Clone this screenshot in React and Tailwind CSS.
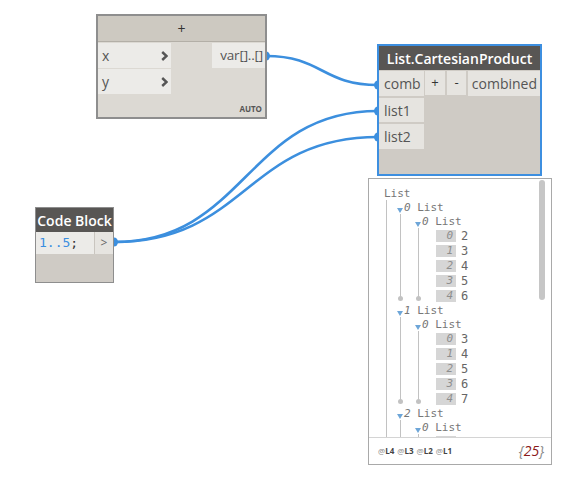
import React from "react";

const Chevron = () => (
  <svg width="7" height="10" viewBox="0 0 7 10" className="block">
    <polyline points="1.2,1 5.5,5 1.2,9" fill="none" stroke="#555" strokeWidth="2.4" />
  </svg>
);

const Tri = () => (
  <span className="inline-block w-0 h-0 border-l-[3.5px] border-r-[3.5px] border-t-[5px] border-l-transparent border-r-transparent border-t-[#6ea6d8] mb-[1px]" />
);

const Line = ({ dot = true }) => (
  <>
    <span className={`absolute left-[3px] top-0 w-px bg-[#c2c2c2] ${dot ? "bottom-[4px]" : "bottom-0"}`} />
    {dot && <span className="absolute left-[1px] bottom-[2px] w-[5px] h-[5px] rounded-full bg-[#c2c2c2]" />}
  </>
);

const Header = ({ i }) => (
  <div className="h-[14px] flex items-end leading-[13px]">
    <Tri />
    <span className="italic ml-[1px]">{i}</span>
    <span className="ml-[6.6px]">List</span>
  </div>
);

const L1Group = ({ i, values }) => (
  <div>
    <Header i={i} />
    <div className="relative pl-[18px]">
      <Line />
      <Header i={0} />
      <div className="relative pl-[21px]">
        <Line />
        {values.map((v, j) => (
          <div key={j} className="h-[15px] flex items-center">
            <span className="w-[20px] h-[12px] bg-[#d6d6d6] text-right pr-[3px] italic text-[#8e8e8e] leading-[12px]">{j}</span>
            <span className="ml-[5px] text-[12px] text-[#666]">{v}</span>
          </div>
        ))}
      </div>
    </div>
  </div>
);

export default function App() {
  const groups = [
    [2, 3, 4, 5, 6],
    [3, 4, 5, 6, 7],
    [4, 5, 6, 7, 8],
  ];
  return (
    <div className="relative w-[576px] h-[478px] bg-white overflow-hidden font-['Open_Sans',sans-serif]">
      {/* wires */}
      <svg className="absolute inset-0 pointer-events-none" width="576" height="478">
        <g fill="none" stroke="#3c8fde" strokeWidth="2.6">
          <path d="M 266 56 C 322 56, 322 85, 378 85" />
          <path d="M 114 242 C 246 242, 246 111, 378 111" />
          <path d="M 114 242 C 246 242, 246 137, 378 137" />
        </g>
        <g fill="#3c8fde">
          <ellipse cx="266" cy="56" rx="4" ry="4.5" />
          <ellipse cx="114" cy="242" rx="4" ry="4.5" />
          <ellipse cx="378" cy="85" rx="4" ry="4.5" />
          <ellipse cx="378" cy="111" rx="4" ry="4.5" />
          <ellipse cx="378" cy="137" rx="4" ry="4.5" />
        </g>
      </svg>

      {/* + node */}
      <div className="absolute left-[96px] top-[14px] w-[171px] h-[105px] border-2 border-[#8e8e8e] bg-[#dcd9d3] flex flex-col">
        <div className="h-[26px] bg-[#cdc9c1] border-b border-[#b3afa7] flex items-center justify-center text-[14px] text-[#333]">+</div>
        <div className="flex flex-1">
          <div className="w-[73px] flex flex-col gap-[1px] pt-[1px]">
            <div className="h-[25px] bg-[#ecebe8] flex items-center justify-between pl-[4px] pr-[3px] text-[14px] text-[#555]">
              <span>x</span>
              <Chevron />
            </div>
            <div className="h-[25px] bg-[#ecebe8] flex items-center justify-between pl-[4px] pr-[3px] text-[14px] text-[#555]">
              <span>y</span>
              <Chevron />
            </div>
          </div>
          <div className="flex-1 flex flex-col items-end pt-[1px]">
            <div className="h-[25px] w-[53px] bg-[#ecebe8] flex items-center justify-end pr-[2px] text-[13.5px] text-[#555] tracking-[-0.2px]">var[]..[]</div>
            <div className="flex-1" />
            <div className="text-[8px] font-bold text-[#555] pr-[3px] pb-[4px] leading-none">AUTO</div>
          </div>
        </div>
      </div>

      {/* List.CartesianProduct node */}
      <div className="absolute left-[377px] top-[44px] w-[165px] h-[132px] border-2 border-[#3d8fe0] bg-[#cfcbc5] flex flex-col">
        <div className="h-[24px] bg-[#585654] flex items-center justify-center text-[14px] font-semibold text-white">List.CartesianProduct</div>
        <div className="flex gap-[1px] pt-[1px]">
          <div className="w-[45px] flex flex-col gap-[2px]">
            <div className="h-[25px] bg-[#e6e4e0] flex items-center pl-[5px] text-[14px] text-[#555]">comb</div>
            <div className="h-[24px] bg-[#e6e4e0] flex items-center pl-[5px] text-[14px] text-[#555]">list1</div>
            <div className="h-[25px] bg-[#e6e4e0] flex items-center pl-[5px] text-[14px] text-[#555]">list2</div>
          </div>
          <div className="flex-1 flex gap-[2px] items-start">
            <div className="w-[20px] h-[24px] bg-[#e6e4e0] flex items-center justify-center text-[13px] text-[#333]">+</div>
            <div className="w-[19px] h-[24px] bg-[#e6e4e0] flex items-center justify-center text-[13px] text-[#333]">-</div>
            <div className="flex-1 h-[25px] bg-[#e6e4e0] flex items-center justify-end pr-[3px] text-[14px] text-[#555]">combined</div>
          </div>
        </div>
      </div>

      {/* Code Block node */}
      <div className="absolute left-[35px] top-[207px] w-[79px] h-[76px] border border-[#8e8e8e] bg-[#cfcbc5] flex flex-col">
        <div className="h-[24px] bg-[#585654] flex items-center justify-center text-[14px] font-semibold text-white">Code Block</div>
        <div className="h-[22px] flex">
          <div className="flex-1 bg-[#ecebe8] flex items-center pl-[3px] text-[13px] font-['DejaVu_Sans_Mono',monospace]">
            <span className="text-[#3b8ee0]">1..5</span>
            <span className="text-[#333]">;</span>
          </div>
          <div className="w-[19px] bg-[#e6e4e0] border-l border-[#c9c5bf] flex items-center justify-center text-[12px] text-[#666]">&gt;</div>
        </div>
      </div>

      {/* Preview panel */}
      <div className="absolute left-[368px] top-[178px] w-[184px] h-[287px] border border-[#a9a9a9] bg-white flex flex-col">
        <div className="relative h-[258px] overflow-hidden pt-[7px] pl-[15px] font-['DejaVu_Sans_Mono',monospace] text-[11px] text-[#777]">
          <div className="h-[14px] flex items-end leading-[13px]">List</div>
          <div className="relative pl-[13px]">
            <span className="absolute left-[2px] top-0 bottom-0 w-px bg-[#c2c2c2]" />
            {groups.map((g, i) => (
              <L1Group key={i} i={i} values={g} />
            ))}
          </div>
          <span className="absolute right-[6px] top-[1px] w-[6px] h-[120px] rounded-full bg-[#c6c6c6]" />
        </div>
        <div className="flex-1 border-t border-[#d4d4d4] flex items-center justify-between pl-[9px] pr-[7px]">
          <div className="flex gap-[3px] text-[8px] leading-[10px]">
            {["L4", "L3", "L2", "L1"].map((l) => (
              <span key={l}>
                <span className="text-[#888]">@</span>
                <span className="font-bold text-[#444]">{l}</span>
              </span>
            ))}
          </div>
          <div className="text-[14px] italic leading-[16px]">
            <span className="text-[#888]">{"{"}</span>
            <span className="text-[#8b1a1a]">25</span>
            <span className="text-[#888]">{"}"}</span>
          </div>
        </div>
      </div>
    </div>
  );
}
